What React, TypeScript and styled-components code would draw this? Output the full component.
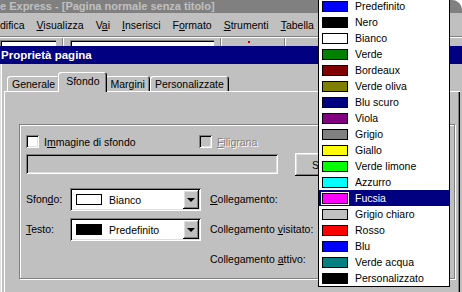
import styled, { createGlobalStyle } from "styled-components";

const GlobalStyle = createGlobalStyle`
  html, body { margin: 0; padding: 0; background: #ffffff; }
  body { font-family: "Liberation Sans", Arial, sans-serif; font-size: 10.5px; color: #000; }
  * { box-sizing: border-box; }
`;

const raised = `box-shadow: inset -1px -1px #000, inset 1px 1px #fff, inset -2px -2px #808080, inset 2px 2px #dfdfdf;`;
const sunken = `box-shadow: inset 1px 1px #808080, inset -1px -1px #fff, inset 2px 2px #000, inset -2px -2px #dfdfdf;`;

const Screen = styled.div`
  position: relative;
  width: 462px;
  height: 292px;
  overflow: hidden;
  display: flex;
  flex-direction: column;
  background: #c0c0c0;
  border-top-right-radius: 10px;
`;

const AppTitle = styled.div`
  flex: none;
  height: 13px;
  background: #808080;
  color: #c0c0c0;
  font-weight: bold;
  font-size: 11px;
  line-height: 12px;
  white-space: nowrap;
  overflow: hidden;
`;

const MenuBar = styled.div`
  flex: none;
  height: 23px;
  display: flex;
  align-items: center;
  gap: 12px;
  padding-top: 1px;
  white-space: nowrap;
`;

const ToolStrip = styled.div`
  flex: none;
  height: 10px;
  display: flex;
  align-items: flex-end;
  gap: 6px;
  border-top: 1px solid #808080;
  box-shadow: inset 0 1px #fff;
`;

const ToolField = styled.div<{ $w: number }>`
  width: ${p => p.$w}px;
  height: 6px;
  background: #fff;
  box-shadow: inset 1px 1px #808080, inset 2px 2px #000;
`;

const ToolSep = styled.div`
  width: 2px;
  height: 8px;
  border-left: 1px solid #808080;
  border-right: 1px solid #fff;
`;

const ToolGap = styled.div<{ $w: number }>`
  width: ${p => p.$w}px;
  height: 6px;
  position: relative;
`;

const RedDot = styled.span`
  position: absolute;
  left: 20px;
  top: 1px;
  width: 2px;
  height: 2px;
  background: #c00000;
`;

const DialogTitle = styled.div`
  flex: none;
  height: 18px;
  background: #000080;
  color: #fff;
  font-weight: bold;
  font-size: 11.5px;
  line-height: 18px;
  padding-left: 1px;
  white-space: nowrap;
`;

const DialogBody = styled.div`
  flex: 1;
  display: flex;
  flex-direction: column;
  padding: 0 2px 0 4px;
  box-shadow: inset 1px 0 #dfdfdf, inset 2px 0 #fff;
`;

const TabRow = styled.div`
  flex: none;
  height: 27px;
  display: flex;
  align-items: flex-end;
  padding-left: 3px;
  position: relative;
  z-index: 1;
`;

const Tab = styled.div<{ $active?: boolean }>`
  height: ${p => (p.$active ? 20 : 15)}px;
  padding: 0 ${p => (p.$active ? 8 : 5)}px ${p => (p.$active ? 2 : 0)}px;
  margin: 0 ${p => (p.$active ? -2 : 0)}px ${p => (p.$active ? -1 : 0)}px;
  display: flex;
  align-items: center;
  background: #c0c0c0;
  border-top-left-radius: 3px;
  border-top-right-radius: 3px;
  box-shadow: inset 1px 1px #fff, inset -1px 0 #000, inset -2px 0 #808080;
  white-space: nowrap;
  position: relative;
  z-index: ${p => (p.$active ? 2 : 1)};
`;

const Panel = styled.div`
  flex: 1;
  margin-bottom: -20px;
  background: #c0c0c0;
  box-shadow: inset 1px 1px #fff, inset -1px 0 #000, inset -2px 0 #808080;
  padding: 33px 5px 0 15px;
`;

const GroupBox = styled.div`
  height: 155px;
  border: 1px solid #808080;
  box-shadow: inset 1px 1px #fff, 1px 1px #fff;
  padding: 10px 0 0 6px;
`;

const CheckRow = styled.div`
  display: flex;
  align-items: center;
  height: 13px;
`;

const CheckItem = styled.label<{ $w?: number }>`
  display: flex;
  align-items: center;
  gap: 5px;
  width: ${p => (p.$w ? `${p.$w}px` : "auto")};
`;

const CheckBox = styled.span<{ $disabled?: boolean }>`
  width: 13px;
  height: 13px;
  flex: none;
  background: ${p => (p.$disabled ? "#c0c0c0" : "#fff")};
  ${sunken}
`;

const DisabledText = styled.span`
  color: #808080;
  text-shadow: 1px 1px #fff;
`;

const FieldRow = styled.div`
  display: flex;
  align-items: flex-start;
  gap: 17px;
  margin-top: 5px;
  height: 23px;
`;

const PathField = styled.div`
  width: 252px;
  height: 20px;
  margin-top: 1px;
  background: #c0c0c0;
  ${sunken}
`;

const Button = styled.div`
  width: 75px;
  height: 23px;
  display: flex;
  align-items: center;
  justify-content: center;
  ${raised}
`;

const ColorGrid = styled.div`
  display: grid;
  grid-template-columns: 44px 131px auto;
  grid-auto-rows: 23px;
  row-gap: 7px;
  margin-top: 12px;
  align-items: center;
`;

const Label = styled.span<{ $col?: number; $indent?: boolean }>`
  grid-column: ${p => p.$col ?? "auto"};
  padding-left: ${p => (p.$indent ? 9 : 0)}px;
  white-space: nowrap;
  padding-bottom: 1px;
`;

const Combo = styled.div`
  height: 23px;
  display: flex;
  align-items: center;
  background: #fff;
  padding: 2px;
  ${sunken}
`;

const ComboValue = styled.div`
  flex: 1;
  display: flex;
  align-items: center;
  gap: 7px;
  padding-left: 4px;
`;

const ComboSwatch = styled.span<{ $color: string }>`
  width: 26px;
  height: 11px;
  border: 1px solid #000;
  background: ${p => p.$color};
`;

const ComboButton = styled.div`
  width: 16px;
  height: 19px;
  display: flex;
  align-items: center;
  justify-content: center;
  background: #c0c0c0;
  ${raised}
`;

const Arrow = styled.span`
  width: 0;
  height: 0;
  border-left: 4px solid transparent;
  border-right: 4px solid transparent;
  border-top: 4px solid #000;
  margin-top: 1px;
`;

const ColorList = styled.ul`
  position: absolute;
  left: 318px;
  top: -3px;
  width: 132px;
  margin: 0;
  padding: 0;
  list-style: none;
  background: #fff;
  border: 1px solid #000;
  z-index: 5;
`;

const ColorItem = styled.li<{ $selected?: boolean }>`
  height: 16px;
  display: flex;
  align-items: center;
  gap: 7px;
  padding-left: 3px;
  background: ${p => (p.$selected ? "#000080" : "#fff")};
  color: ${p => (p.$selected ? "#fff" : "#000")};
  white-space: nowrap;
`;

const ListSwatch = styled.span<{ $color: string; $ring?: boolean }>`
  width: 26px;
  height: 11px;
  flex: none;
  border: 1px solid #000;
  background: ${p => p.$color};
  outline: ${p => (p.$ring ? "1px solid #fff" : "none")};
`;

const colors: [string, string][] = [
  ["Predefinito", "#0000ff"],
  ["Nero", "#000000"],
  ["Bianco", "#ffffff"],
  ["Verde", "#008000"],
  ["Bordeaux", "#800000"],
  ["Verde oliva", "#808000"],
  ["Blu scuro", "#000080"],
  ["Viola", "#800080"],
  ["Grigio", "#808080"],
  ["Giallo", "#ffff00"],
  ["Verde limone", "#00ff00"],
  ["Azzurro", "#00ffff"],
  ["Fucsia", "#ff00ff"],
  ["Grigio chiaro", "#c0c0c0"],
  ["Rosso", "#ff0000"],
  ["Blu", "#0000ff"],
  ["Verde acqua", "#008080"],
  ["Personalizzato", "#000000"],
];

const ColorCombo = ({ color, text }: { color: string; text: string }) => (
  <Combo>
    <ComboValue>
      <ComboSwatch $color={color} />
      {text}
    </ComboValue>
    <ComboButton>
      <Arrow />
    </ComboButton>
  </Combo>
);

export default function App() {
  return (
    <>
      <GlobalStyle />
      <Screen>
        <AppTitle>e Express - [Pagina normale senza titolo]</AppTitle>
        <MenuBar>
          <span>difica</span>
          <span><u>V</u>isualizza</span>
          <span>V<u>a</u>i</span>
          <span><u>I</u>nserisci</span>
          <span>F<u>o</u>rmato</span>
          <span><u>S</u>trumenti</span>
          <span><u>T</u>abella</span>
        </MenuBar>
        <ToolStrip>
          <ToolField $w={56} />
          <ToolSep />
          <ToolField $w={144} />
          <ToolSep />
          <ToolGap $w={50}>
            <RedDot />
          </ToolGap>
          <ToolSep />
        </ToolStrip>
        <DialogTitle>Proprietà pagina</DialogTitle>
        <DialogBody>
          <TabRow>
            <Tab>Generale</Tab>
            <Tab $active>Sfondo</Tab>
            <Tab>Margini</Tab>
            <Tab>Personalizzate</Tab>
          </TabRow>
          <Panel>
            <GroupBox>
              <CheckRow>
                <CheckItem $w={173}>
                  <CheckBox />
                  <span>I<u>m</u>magine di sfondo</span>
                </CheckItem>
                <CheckItem>
                  <CheckBox $disabled />
                  <DisabledText><u>F</u>iligrana</DisabledText>
                </CheckItem>
              </CheckRow>
              <FieldRow>
                <PathField />
                <Button>Sfoglia...</Button>
              </FieldRow>
              <ColorGrid>
                <Label>Sfon<u>d</u>o:</Label>
                <ColorCombo color="#ffffff" text="Bianco" />
                <Label $indent><u>C</u>ollegamento:</Label>
                <Label><u>T</u>esto:</Label>
                <ColorCombo color="#000000" text="Predefinito" />
                <Label $indent>Collegamento <u>v</u>isitato:</Label>
                <Label $col={3} $indent>Collegamento <u>a</u>ttivo:</Label>
              </ColorGrid>
            </GroupBox>
          </Panel>
        </DialogBody>
        <ColorList>
          {colors.map(([name, c]) => (
            <ColorItem key={name} $selected={name === "Fucsia"}>
              <ListSwatch $color={c} $ring={name === "Fucsia"} />
              {name}
            </ColorItem>
          ))}
        </ColorList>
      </Screen>
    </>
  );
}
